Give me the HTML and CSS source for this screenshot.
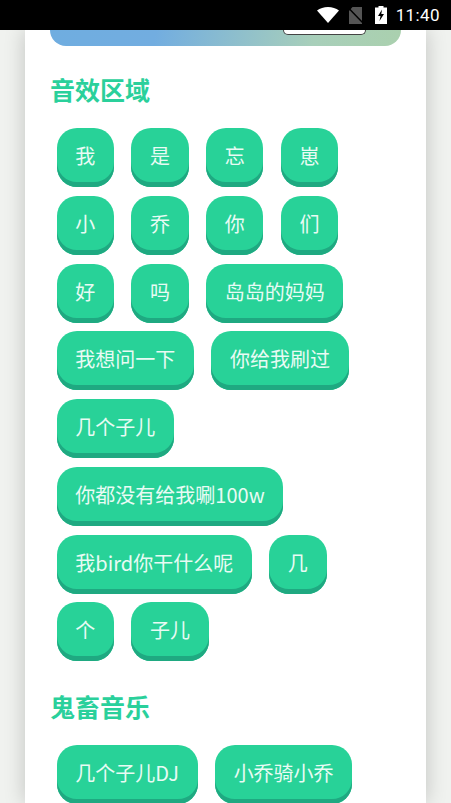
FILE: index.html
```html
<!DOCTYPE html>
<html lang="zh">
<head>
<meta charset="utf-8">
<title>音效区域</title>
<link rel="stylesheet" href="styles.css">
</head>
<body>
<header class="status">
  <svg class="ic-wifi" viewBox="0 0 22 16"><path d="M0 3.5C3 1.2 6.800 0 11 0s8 1.200 11 3.500L11 16z" fill="#fff"/></svg>
  <svg class="ic-sim" viewBox="0 0 16 17"><path d="M4.500 0H14v17H1V4z" fill="#555"/><path d="M0 .5L15.500 16.500" stroke="#000" stroke-width="1.500"/></svg>
  <svg class="ic-bat" viewBox="0 0 12 18"><path d="M3.500 0h5v1.500H12V18H0V1.500h3.500z" fill="#fff"/><path d="M7 3.500L3 10h2.500L4.500 15 9 8H6.300z" fill="#000"/></svg>
  <span class="time">11:40</span>
</header>
<main class="card">
  <div class="banner"><div class="banner-btn"></div></div>
  <h2 class="title first">音效区域</h2>
  <div class="tags">
    <button class="tag">我</button><button class="tag">是</button><button class="tag">忘</button><button class="tag">崽</button>
    <button class="tag">小</button><button class="tag">乔</button><button class="tag">你</button><button class="tag">们</button>
    <button class="tag">好</button><button class="tag">吗</button><button class="tag">岛岛的妈妈</button>
    <button class="tag">我想问一下</button><button class="tag">你给我刷过</button>
    <button class="tag">几个子儿</button>
    <button class="tag">你都没有给我唰100w</button>
    <button class="tag">我bird你干什么呢</button><button class="tag">几</button>
    <button class="tag">个</button><button class="tag">子儿</button>
  </div>
  <h2 class="title second">鬼畜音乐</h2>
  <div class="tags">
    <button class="tag">几个子儿DJ</button><button class="tag">小乔骑小乔</button>
  </div>
</main>
</body>
</html>
```
FILE: styles.css
```css
html, body {
  margin: 0;
  padding: 0;
  height: 803px;
  overflow: hidden;
  background: #f0f2ef;
  font-family: "Noto Sans CJK SC", "Noto Sans", sans-serif;
}
.status {
  position: relative;
  z-index: 2;
  height: 30px;
  background: #000;
  display: flex;
  align-items: center;
  justify-content: flex-end;
  padding-right: 11px;
  box-sizing: border-box;
}
.ic-wifi { width: 22px; height: 16px; margin-right: 9px; }
.ic-sim { width: 16px; height: 17px; margin-right: 11px; }
.ic-bat { width: 12px; height: 18px; margin-right: 9px; }
.time {
  font-family: Roboto, sans-serif;
  font-size: 17px;
  color: #fff;
  letter-spacing: 0.4px;
}
.card {
  width: 401px;
  margin-left: 25px;
  height: 773px;
  background: #fff;
  box-shadow: 0 0 20px rgba(0, 0, 0, 0.2);
  padding: 0 25px;
  box-sizing: border-box;
  overflow: hidden;
}
.banner {
  height: 16px;
  border-radius: 0 0 16px 16px;
  background: linear-gradient(100deg, #6fade0 0%, #72ade0 30%, #a8cfba 75%, #aad0ae 100%);
  display: flex;
  justify-content: flex-end;
  padding-right: 35px;
}
.banner-btn {
  width: 81px;
  height: 4px;
  background: #fff;
  border: 1px solid #444;
  border-top: 0;
  border-radius: 0 0 5px 5px;
}
.title {
  margin: 0;
  font-size: 25px;
  line-height: 36px;
  font-weight: 700;
  color: #2ad09b;
}
.title.first { margin-top: 25px; margin-bottom: 21px; }
.title.second { margin-top: 27px; margin-bottom: 21px; }
.tags {
  display: flex;
  flex-wrap: wrap;
  gap: 8.750px 17.200px;
  padding-left: 6.600px;
  width: 345px;
  box-sizing: border-box;
}
.tag {
  height: 59px;
  padding: 0 18.750px 3px;
  border: 0;
  border-radius: 20px;
  background: #28d298;
  box-shadow: inset 0 -5px 0 #1fa981;
  color: #e8fbf4;
  font-family: inherit;
  font-size: 20px;
  line-height: 1;
}
```
